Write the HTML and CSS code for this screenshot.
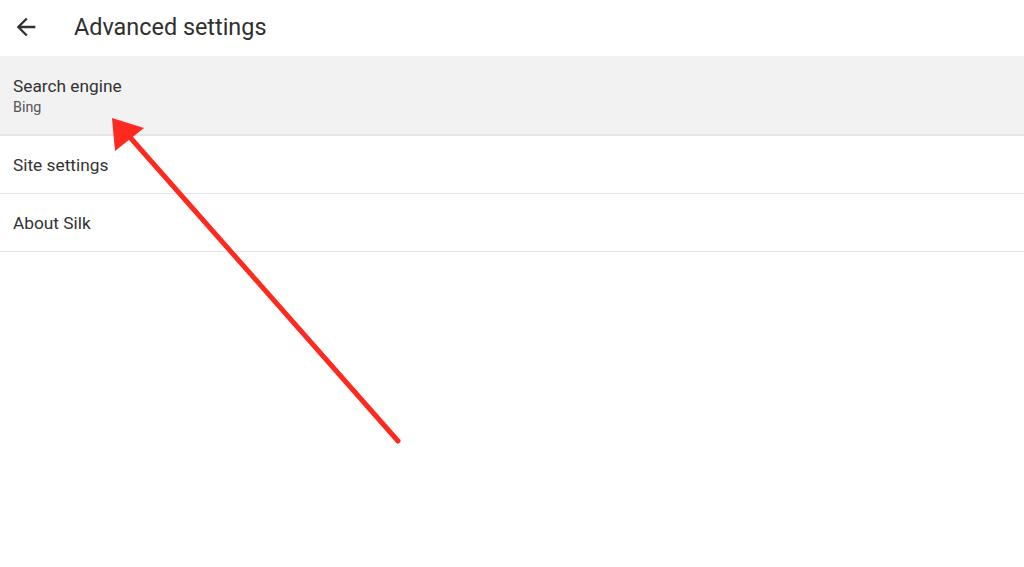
FILE: index.html
```html
<!DOCTYPE html>
<html>
<head>
<meta charset="utf-8">
<link rel="stylesheet" href="styles.css">
</head>
<body>
<header class="topbar">
  <svg class="back" viewBox="0 0 24 24" width="28" height="28"><path d="M20 11H7.83l5.59-5.59L12 4l-8 8 8 8 1.41-1.41L7.83 13H20v-2z" fill="#333"/></svg>
  <h1 class="title">Advanced settings</h1>
</header>
<ul class="list">
  <li class="row row-active"><span class="row-title">Search engine</span><span class="row-sub">Bing</span></li>
  <li class="row"><span class="row-title">Site settings</span></li>
  <li class="row"><span class="row-title">About Silk</span></li>
</ul>
<svg class="annot" width="1024" height="567" viewBox="0 0 1024 567">
  <line x1="398" y1="441" x2="128" y2="135" stroke="#fe2a1f" stroke-width="5" stroke-linecap="round"/>
  <polygon points="112,118 144,128 115,151" fill="#fe2a1f"/>
</svg>
</body>
</html>
```
FILE: styles.css
```css
* { box-sizing: border-box; }
html, body { margin: 0; padding: 0; background: #fff; }
body {
  font-family: Roboto, "Noto Sans", sans-serif;
  color: #333;
  width: 1024px;
  height: 567px;
  overflow: hidden;
  position: relative;
}
.topbar {
  height: 56px;
  display: flex;
  align-items: center;
  padding-left: 12px;
  padding-bottom: 2px;
}
.back { display: block; }
.title {
  margin: 0 0 0 34px;
  font-size: 23.4px;
  font-weight: 400;
  color: #2f2f2f;
}
.list { list-style: none; margin: 0; padding: 0; }
.row {
  height: 58px;
  display: flex;
  flex-direction: column;
  justify-content: center;
  padding-left: 13px;
  border-bottom: 1px solid #e4e4e4;
}
.row-active {
  height: 80px;
  background: #f2f2f2;
  border-bottom: 2px solid #e6e6e6;
  justify-content: flex-start;
  padding-top: 19px;
}
.row-title { font-size: 17.3px; line-height: 22px; color: #333; }
.row-sub { font-size: 14.3px; line-height: 20px; color: #555; }
.annot { position: absolute; left: 0; top: 0; pointer-events: none; }
```
